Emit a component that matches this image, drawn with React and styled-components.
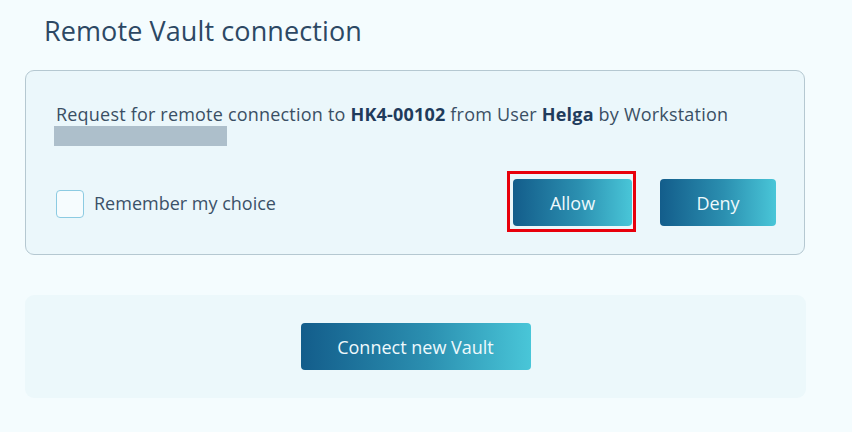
import styled, { createGlobalStyle } from 'styled-components'

const Global = createGlobalStyle`
    html, body {
        margin: 0;
        background: #f4fcfe;
        font-family: "Open Sans", "Noto Sans", sans-serif;
    }
`

export default function App() {
    return (
        <>
            <Global />
            <Page>
                <Title>Remote Vault connection</Title>
                <RequestCard>
                    <Message>
                        Request for remote connection to <b>HK4-00102</b> from User <b>Helga</b> by Workstation
                        <Redacted />
                    </Message>
                    <Row>
                        <Check>
                            <input type="checkbox" />
                            <span className="box" />
                            Remember my choice
                        </Check>
                        <Actions>
                            <Button $w={119} $marked>Allow</Button>
                            <Button $w={116}>Deny</Button>
                        </Actions>
                    </Row>
                </RequestCard>
                <ConnectCard>
                    <Button $w={230}>Connect new Vault</Button>
                </ConnectCard>
            </Page>
        </>
    )
}

const Page = styled.div`
    padding: 14px 0 0 25px;
    width: 781px;
    display: flex;
    flex-direction: column;
`

const Title = styled.h1`
    margin: 0 0 22px 19px;
    font-size: 27px;
    line-height: 34px;
    font-weight: 400;
    letter-spacing: 0.1px;
    color: #2c4864;
`

const RequestCard = styled.div`
    box-sizing: border-box;
    width: 780px;
    height: 185px;
    padding: 32px 28px 0 30px;
    background: #ebf7fb;
    border: 1px solid #b5c8d1;
    border-radius: 9px;
    display: flex;
    flex-direction: column;
`

const Message = styled.div`
    font-size: 18px;
    line-height: 22px;
    letter-spacing: 0.2px;
    color: #3a4f64;

    b {
        font-weight: 700;
        color: #1f3b5b;
    }
`

const Redacted = styled.span`
    display: block;
    width: 173px;
    height: 20px;
    margin: 1px 0 0 -2px;
    background: #adbfcb;
`

const Row = styled.div`
    margin-top: 33px;
    display: flex;
    align-items: center;
    justify-content: space-between;
`

const Check = styled.label`
    display: flex;
    align-items: center;
    gap: 10px;
    font-size: 18px;
    color: #3b5168;

    input {
        display: none;
    }

    .box {
        box-sizing: border-box;
        width: 28px;
        height: 28px;
        margin-top: 2px;
        border: 1.5px solid #8ccbe2;
        border-radius: 4px;
        background: #f6fcfe;
    }
`

const Actions = styled.div`
    display: flex;
    gap: 28px;
`

const Button = styled.button`
    position: relative;
    width: ${p => p.$w}px;
    height: 47px;
    border: none;
    border-radius: 4px;
    background: linear-gradient(90deg, #135d8b 0%, #2b8fb0 55%, #49c6d8 100%);
    color: #eef9fc;
    font-family: "Open Sans", "Noto Sans", sans-serif;
    font-size: 18px;
    cursor: pointer;

    &::after {
        content: '';
        display: ${p => (p.$marked ? 'block' : 'none')};
        position: absolute;
        inset: -8px -4px -6px -6px;
        border: 3px solid #e8000b;
    }
`

const ConnectCard = styled.div`
    margin-top: 40px;
    height: 103px;
    border-radius: 9px;
    background: #ecf8fb;
    display: flex;
    align-items: center;
    justify-content: center;
`
